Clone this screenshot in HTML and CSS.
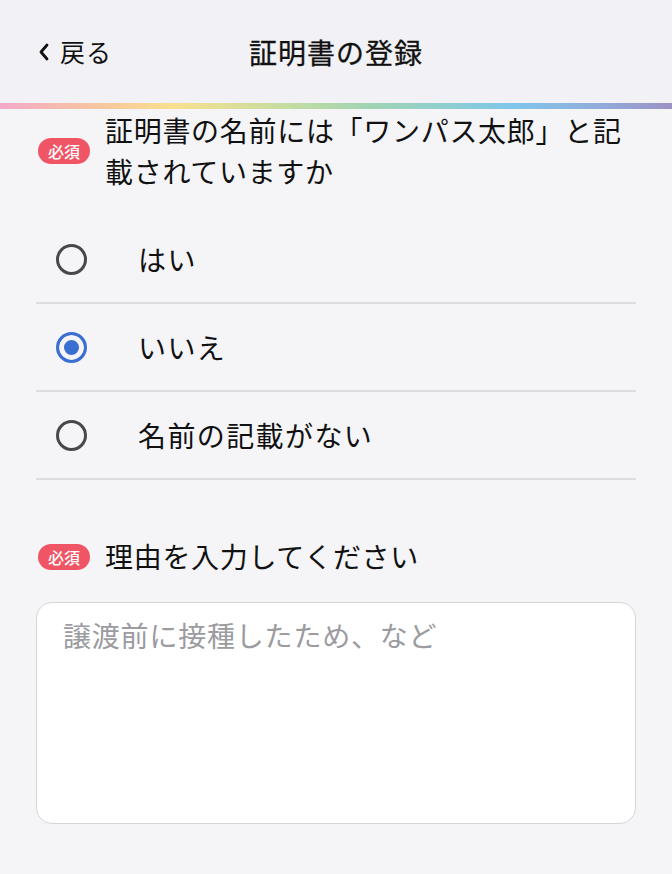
FILE: index.html
```html
<!DOCTYPE html>
<html lang="ja">
<head>
	<meta charset="utf-8">
	<meta name="viewport" content="width=device-width, initial-scale=1">
	<title>証明書の登録</title>
	<link rel="stylesheet" href="styles.css">
</head>
<body>
	<header class="header">
		<a class="back" href="#">
			<svg class="back-icon" viewBox="0 0 12 20" width="12" height="20">
				<path d="M9 3 L3 10 L9 17" fill="none" stroke="#111" stroke-width="2.8" stroke-linecap="round" stroke-linejoin="round"/>
			</svg>
			<span>戻る</span>
		</a>
		<h1 class="title">証明書の登録</h1>
		<div></div>
	</header>
	<div class="rainbow"></div>

	<main class="content">
		<div class="question">
			<span class="badge">必須</span>
			<p class="question-text">証明書の名前には「ワンパス太郎」と記載されていますか</p>
		</div>

		<div class="options">
			<label class="option">
				<input type="radio" name="name">
				<span>はい</span>
			</label>
			<label class="option">
				<input type="radio" name="name" checked>
				<span>いいえ</span>
			</label>
			<label class="option">
				<input type="radio" name="name">
				<span>名前の記載がない</span>
			</label>
		</div>

		<div class="question reason">
			<span class="badge">必須</span>
			<p class="question-text">理由を入力してください</p>
		</div>

		<textarea class="reason-input" placeholder="譲渡前に接種したため、など"></textarea>
	</main>
</body>
</html>
```

FILE: styles.css
```css
body {
	margin: 0;
	font-family: "Noto Sans CJK JP", "Noto Sans", sans-serif;
	background-color: #f5f5f8;
	color: #111;
}
.header {
	display: grid;
	grid-template-columns: 1fr auto 1fr;
	align-items: center;
	height: 103px;
	padding: 0 36px;
	background: #f2f2f6;
}
.back {
	display: flex;
	align-items: center;
	gap: 10px;
	color: #111;
	text-decoration: none;
	font-size: 25px;
	letter-spacing: 1px;
	line-height: 1;
}
.back-icon {
	margin-left: 2px;
}
.title {
	margin: 0;
	font-size: 28px;
	font-weight: 400;
	letter-spacing: 1px;
	line-height: 1;
	-webkit-text-stroke: 0.3px #111;
}
.rainbow {
	height: 6px;
	background: linear-gradient(to right, #f4a9c9 0%, #f7c3a3 13%, #f8e08f 26%, #c6dda0 42%, #a0d4b2 55%, #8fcfcf 66%, #80c6ea 76%, #8fb1df 87%, #9c92c5 100%);
}
.content {
	padding: 1px 36px 0;
}
.question {
	display: flex;
	align-items: center;
	gap: 15px;
}
.badge {
	flex-shrink: 0;
	width: 52px;
	height: 26px;
	border-radius: 13px;
	background: #ef5564;
	color: #fff;
	font-size: 16px;
	font-weight: 500;
	line-height: 26px;
	text-align: center;
	margin-left: 2px;
}
.question-text {
	margin: 0;
	font-size: 28px;
	letter-spacing: 0.7px;
	line-height: 41px;
}
.options {
	margin-top: 24px;
}
.option {
	display: flex;
	align-items: center;
	height: 86px;
	border-bottom: 2px solid #dcdce0;
	font-size: 28px;
	letter-spacing: 1.4px;
}
.option input {
	appearance: none;
	-webkit-appearance: none;
	width: 31px;
	height: 31px;
	margin: 0 51px 0 20px;
	border: 3px solid #48484c;
	border-radius: 50%;
	background: transparent;
}
.option input:checked {
	border-color: #3a6fd2;
	background: #3a6fd2;
	box-shadow: inset 0 0 0 5px #f5f5f8;
}
.reason {
	margin-top: 56px;
}
.reason-input {
	display: block;
	box-sizing: border-box;
	width: 100%;
	height: 222px;
	margin-top: 25px;
	padding: 12px 26px;
	border: 1.5px solid #d6d6da;
	border-radius: 16px;
	background: #fff;
	font-family: inherit;
	font-size: 28px;
	letter-spacing: 0.8px;
	line-height: 41px;
	resize: none;
}
.reason-input::placeholder {
	color: #9b9ba0;
}
```
